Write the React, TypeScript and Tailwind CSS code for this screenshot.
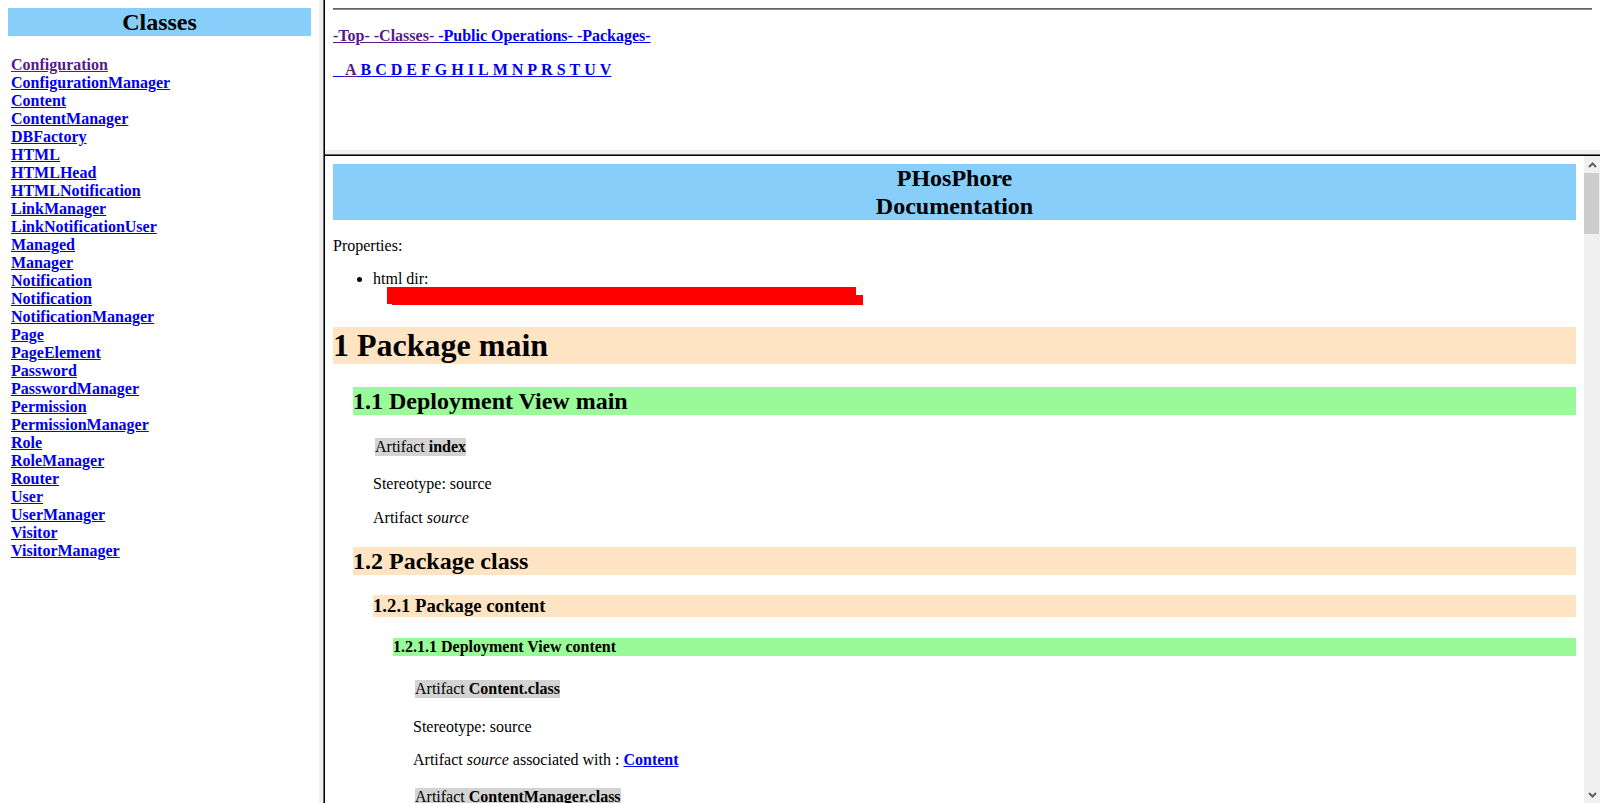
import React from "react";

const classes = [
  "Configuration",
  "ConfigurationManager",
  "Content",
  "ContentManager",
  "DBFactory",
  "HTML",
  "HTMLHead",
  "HTMLNotification",
  "LinkManager",
  "LinkNotificationUser",
  "Managed",
  "Manager",
  "Notification",
  "Notification",
  "NotificationManager",
  "Page",
  "PageElement",
  "Password",
  "PasswordManager",
  "Permission",
  "PermissionManager",
  "Role",
  "RoleManager",
  "Router",
  "User",
  "UserManager",
  "Visitor",
  "VisitorManager",
];

const letters = ["A", "B", "C", "D", "E", "F", "G", "H", "I", "L", "M", "N", "P", "R", "S", "T", "U", "V"];

const nbsp = "\u00a0";

function Artifact({ name, className }: { name: string; className: string }) {
  return (
    <div className={"ml-[2px] w-fit bg-[#d3d3d3] leading-[18px] " + className}>
      Artifact <b>{name}</b>
    </div>
  );
}

function ScrollArrow({ down }: { down?: boolean }) {
  return (
    <div className="flex h-[17px] items-center justify-center">
      <svg width="9" height="6" viewBox="0 0 9 6">
        <path
          d={down ? "M1 1 L4.5 4.5 L8 1" : "M1 5 L4.5 1.5 L8 5"}
          stroke="#606060"
          strokeWidth="2"
          fill="none"
        />
      </svg>
    </div>
  );
}

export default function App() {
  return (
    <div className="flex h-[803px] w-[1600px] overflow-hidden bg-white font-['Liberation_Serif',serif] text-[16px] text-black">
      {/* left frame: class index */}
      <aside className="w-[319px] shrink-0 px-[8px] pt-[8px]">
        <div className="bg-[#87cefa] text-center text-[24px] font-bold leading-[28px]">Classes</div>
        <div className="mt-[20px] pl-[3px] font-bold leading-[18px]">
          {classes.map((c, i) => (
            <div key={i}>
              <a href="#" className={i === 0 ? "text-[#551a8b] underline" : "text-[#0000ee] underline"}>
                {c}
              </a>
            </div>
          ))}
        </div>
      </aside>

      {/* frame borders */}
      <div className="w-[4px] shrink-0 bg-[#f0f0f0]" />
      <div className="w-[1px] shrink-0 bg-[#696969]" />
      <div className="w-[1px] shrink-0 bg-black" />

      <div className="flex min-w-0 flex-1 flex-col">
        {/* top frame: navigation */}
        <div className="h-[150px] shrink-0 px-[8px] pt-[8px]">
          <div className="h-[2px] border-t border-b border-t-[#5f5f5f] border-b-[#8c8c8c]" />
          <p className="mt-[17px] font-bold leading-[18px]">
            <a href="#" className="text-[#551a8b] underline">{"-Top-" + nbsp}</a>
            <a href="#" className="text-[#551a8b] underline">{"-Classes-" + nbsp}</a>
            <a href="#" className="text-[#0000ee] underline">{"-Public Operations-" + nbsp}</a>
            <a href="#" className="text-[#0000ee] underline">-Packages-</a>
          </p>
          <p className="mt-[16px] font-bold leading-[18px]">
            <a href="#" className="text-[#0000ee] underline">{nbsp + nbsp}</a>
            {letters.map((l) => (
              <a key={l} href="#" className={l === "A" ? "text-[#551a8b] underline" : "text-[#0000ee] underline"}>
                {nbsp + l}
              </a>
            ))}
          </p>
        </div>

        <div className="h-[4px] shrink-0 bg-[#f0f0f0]" />
        <div className="h-[1px] shrink-0 bg-[#696969]" />
        <div className="h-[1px] shrink-0 bg-black" />

        {/* bottom frame: documentation */}
        <div className="flex min-h-0 flex-1">
          <div className="min-w-0 flex-1 overflow-hidden px-[8px] pt-[8px] leading-[18px]">
            <div className="bg-[#87cefa] text-center text-[24px] font-bold leading-[28px]">
              PHosPhore
              <br />
              Documentation
            </div>
            <p className="mt-[17px]">Properties:</p>
            <ul className="mt-[15px] list-disc pl-[40px]">
              <li>
                html dir:
                <span className="relative block h-[18px]">
                  <span className="absolute left-[14px] top-[-1px] h-[17px] w-[469px] bg-[#ff0000]" />
                  <span className="absolute left-[19px] top-[7px] h-[10px] w-[471px] bg-[#ff0000]" />
                </span>
              </li>
            </ul>

            <h1 className="mt-[21px] bg-[#ffe4c4] text-[32px] font-bold leading-[37px]">1 Package main</h1>
            <div className="ml-[20px]">
              <h2 className="mt-[23px] bg-[#98fb98] text-[24px] font-bold leading-[28px]">1.1 Deployment View main</h2>
              <div className="ml-[20px]">
                <Artifact name="index" className="mt-[23px]" />
                <p className="mt-[19px]">Stereotype: source</p>
                <p className="mt-[16px]">
                  Artifact <i>source</i>
                </p>
              </div>

              <h2 className="mt-[20px] bg-[#ffe4c4] text-[24px] font-bold leading-[28px]">1.2 Package class</h2>
              <div className="ml-[20px]">
                <h3 className="mt-[20px] bg-[#ffe4c4] text-[18.72px] font-bold leading-[22px]">1.2.1 Package content</h3>
                <div className="ml-[20px]">
                  <h4 className="mt-[21px] bg-[#98fb98] text-[16px] font-bold leading-[18px]">
                    1.2.1.1 Deployment View content
                  </h4>
                  <div className="ml-[20px]">
                    <Artifact name="Content.class" className="mt-[24px]" />
                    <p className="mt-[20px]">Stereotype: source</p>
                    <p className="mt-[15px]">
                      Artifact <i>source</i> associated with :{" "}
                      <a href="#" className="font-bold text-[#0000ee] underline">
                        Content
                      </a>
                    </p>
                    <Artifact name="ContentManager.class" className="mt-[19px]" />
                  </div>
                </div>
              </div>
            </div>
          </div>

          {/* scrollbar */}
          <div className="flex w-[16px] shrink-0 flex-col bg-[#f0f0f0]">
            <ScrollArrow />
            <div className="h-[61px] w-[15px] bg-[#cdcdcd]" />
            <div className="flex-1" />
            <ScrollArrow down />
          </div>
        </div>
      </div>
    </div>
  );
}
